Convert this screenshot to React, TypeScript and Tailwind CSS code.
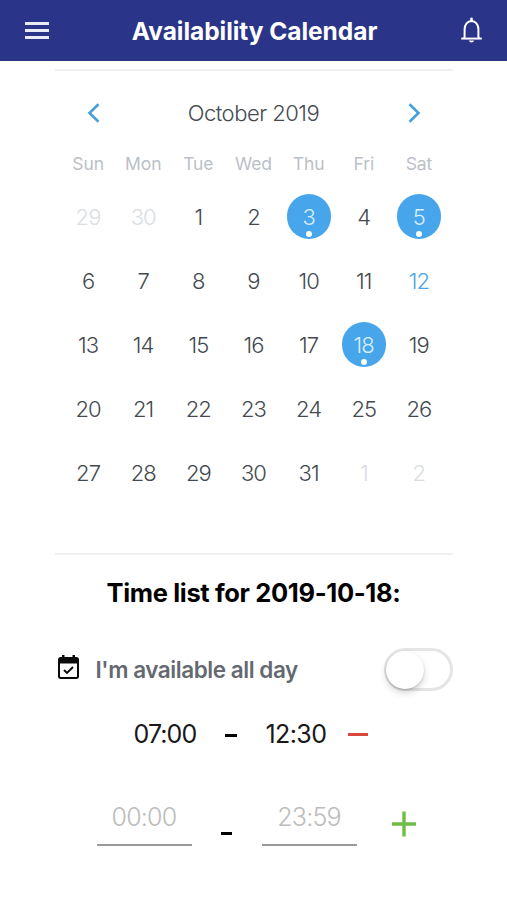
import React, { useState } from "react";

type Day = {
    date: number,
    type?: 'outside' | 'today' | 'marked',
}

const WEEKDAYS = ['Sun', 'Mon', 'Tue', 'Wed', 'Thu', 'Fri', 'Sat'];
const MARKED = [3, 5, 18];
const TODAY = 12;

const getDays = (): Day[] => {
    const days: Day[] = [{ date: 29, type: 'outside' }, { date: 30, type: 'outside' }];
    for (let date = 1; date <= 31; date++) {
        if (MARKED.includes(date)) days.push({ date, type: 'marked' });
        else if (date === TODAY) days.push({ date, type: 'today' });
        else days.push({ date });
    }
    days.push({ date: 1, type: 'outside' }, { date: 2, type: 'outside' });
    return days;
}

function Header() {
    return <header className="flex h-[61px] items-center justify-between bg-[#2a3489] pl-[25px] pr-6 text-white">
        <button className="flex w-6 flex-col gap-1" aria-label="Menu">
            <span className="h-[3px] bg-[#e9ebf8]" />
            <span className="h-[3px] bg-[#e9ebf8]" />
            <span className="h-[3px] bg-[#e9ebf8]" />
        </button>
        <h1 className="mt-[2px] whitespace-nowrap text-[24.5px] font-[650] leading-none tracking-[-0.05px]">Availability Calendar</h1>
        <button aria-label="Notifications">
            <svg width="23" height="28" viewBox="0 0 23 28" fill="none" stroke="currentColor" strokeWidth="2">
                <path d="M4.6 20.8V12.2C4.6 7.4 7.6 4 11.5 4S18.4 7.4 18.4 12.2V20.8" />
                <path d="M1.2 22.3L4.6 19.5V21.3H18.4V19.5L21.8 22.3Z" fill="currentColor" stroke="none" />
                <path d="M1.2 21.5H21.8" strokeWidth="1.8" />
                <path d="M11.5 1.8V4" strokeWidth="2.6" strokeLinecap="round" />
                <path d="M9 23.4H14C13.8 24.7 12.8 25.4 11.5 25.4S9.2 24.7 9 23.4Z" fill="currentColor" stroke="none" />
            </svg>
        </button>
    </header>
}

function DayCell(props: { day: Day }) {
    const { date, type } = props.day;
    if (type === 'marked') {
        return <button className="relative mx-auto flex h-[45px] w-11 items-center justify-center rounded-full bg-[#47a5ec] text-[#d8efff]">
            {date}
            <span className="absolute bottom-[2px] left-[19px] size-[6px] rounded-full bg-white" />
        </button>
    }
    return <button className={`h-[45px] ${type === 'outside' ? 'text-[#dadee2]' : type === 'today' ? 'text-[#4ba5e0]' : 'text-[#43494f]'}`}>
        {date}
    </button>
}

function Calendar() {
    return <section className="h-[486px] border-b-2 border-t-2 border-[#efefef] px-[6px]">
        <div className="flex h-[84px] items-center justify-between px-[26px]">
            <button aria-label="Previous month">
                <svg width="14" height="20" viewBox="0 0 14 20" fill="none" stroke="#459fdb" strokeWidth="2.6">
                    <path d="M11.5 1.2L2.5 10L11.5 18.8" />
                </svg>
            </button>
            <h2 className="text-[22px] font-[350] leading-none tracking-[-0.5px] text-[#434a50]">October 2019</h2>
            <button aria-label="Next month">
                <svg width="14" height="20" viewBox="0 0 14 20" fill="none" stroke="#459fdb" strokeWidth="2.6">
                    <path d="M2.5 1.2L11.5 10L2.5 18.8" />
                </svg>
            </button>
        </div>
        <div className="grid h-[18px] grid-cols-7 text-center text-[17.5px] leading-[18px] tracking-[-0.1px] text-[#bbbfc6]">
            {WEEKDAYS.map(name => <span key={name}>{name}</span>)}
        </div>
        <div className="mt-[21px] grid grid-cols-7 gap-y-[19px] text-[22px] font-[350] leading-none tracking-[-0.9px]">
            {getDays().map((day, index) => <DayCell key={index} day={day} />)}
        </div>
    </section>
}

function AllDayRow() {
    const [checked, setChecked] = useState(false);
    return <div className="mt-[42px] flex h-11 items-center">
        <svg className="-mt-[5px] ml-[3px]" width="21" height="24" viewBox="0 0 21 24">
            <path d="M4 0H6.5V2H14.5V0H17V2H18.5C19.9 2 21 3.1 21 4.5V21.5C21 22.9 19.9 24 18.5 24H2.5C1.1 24 0 22.9 0 21.5V4.5C0 3.1 1.1 2 2.5 2H4Z" fill="#0b0b0b" />
            <path d="M2 8.5H19V21.2C19 21.7 18.7 22 18.2 22H2.8C2.3 22 2 21.7 2 21.2Z" fill="#fff" />
            <path d="M6 15L9 18L15 12" fill="none" stroke="#0b0b0b" strokeWidth="1.9" />
        </svg>
        <span className="ml-[17px] mt-[2px] whitespace-nowrap text-[22.5px] font-semibold leading-none tracking-[-0.45px] text-[#646971]">I'm available all day</span>
        <button
            className="ml-auto flex h-[43px] w-[69px] rounded-full border-[3px] border-[#e5e5e5] bg-white"
            role="switch"
            aria-checked={checked}
            aria-label="Available all day"
            onClick={() => setChecked(!checked)}
        >
            <span className={`size-[38px] rounded-full bg-white shadow-[0_4px_7px_rgba(0,0,0,0.16),0_1px_2px_rgba(0,0,0,0.16)] ${checked ? 'ml-[26px]' : '-ml-[1px]'}`} />
        </button>
    </div>
}

function TimeInput(props: { placeholder: string }) {
    return <input
        className="h-[50px] w-[95px] border-b-2 border-[#999999] bg-transparent pb-[6px] text-center text-[25px] font-light tracking-[-0.8px] outline-none placeholder:text-[#bcbcbc]"
        placeholder={props.placeholder}
    />
}

export default function App() {
    return <div className="min-h-[900px] w-full bg-white font-['Inter',sans-serif]">
        <Header />
        <main className="mx-auto w-[398px] pt-2">
            <Calendar />
            <h2 className="mt-[25px] text-center text-[25.5px] font-[650] leading-none tracking-[-0.35px] text-black">Time list for 2019-10-18:</h2>
            <AllDayRow />
            <div className="mt-[30px] flex h-[26px] items-center pl-[79px] text-[25px] leading-none text-[#181818]">
                <span className="w-[64px] tracking-[-0.9px]">07:00</span>
                <span className="ml-[27px] mt-[2px] h-[3px] w-3 bg-black" />
                <span className="ml-[29px] w-[66px] tracking-[-0.6px]">12:30</span>
                <button className="-mt-px ml-[16px] h-[3px] w-5 bg-[#d9483c]" aria-label="Remove time" />
            </div>
            <div className="mt-12 flex pl-[42px]">
                <TimeInput placeholder="00:00" />
                <span className="ml-[29px] mt-9 h-[3px] w-[11px] bg-black" />
                <span className="w-[30px]" />
                <TimeInput placeholder="23:59" />
                <button className="ml-[35px] mt-[15px] size-6" aria-label="Add time">
                    <svg width="24" height="26" viewBox="0 0 24 26" fill="none" stroke="#6ebd45" strokeWidth="3.4">
                        <path d="M12 0.5V25.5M0 13H24" />
                    </svg>
                </button>
            </div>
        </main>
    </div>
}
